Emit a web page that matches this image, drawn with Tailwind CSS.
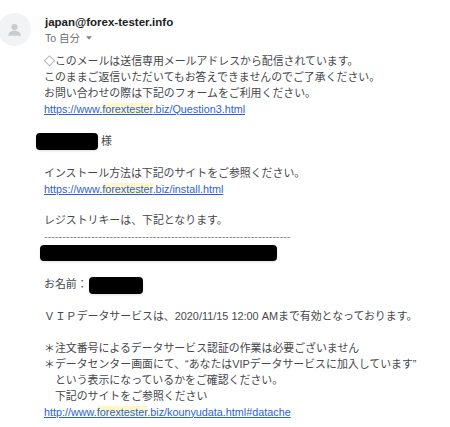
<!DOCTYPE html>
<html lang="ja">
<head>
  <meta charset="UTF-8" />
  <title>Mail</title>
  <script src="https://cdn.jsdelivr.net/npm/@tailwindcss/browser@4"></script>
</head>
<body class="bg-white w-[450px] h-[427px] overflow-hidden font-['Liberation_Sans','Noto_Sans_CJK_JP',sans-serif] text-[#45484b]">
  <div class="flex pt-[13px] -ml-[2px]">
    <div class="w-[33px] h-[33px] rounded-full bg-[#f1f3f4] flex items-center justify-center shrink-0">
      <svg width="15" height="15" viewBox="0 0 24 24" fill="#c9cccf"><circle cx="12" cy="8" r="5"/><path d="M2 21c0-4.500 5-7 10-7s10 2.500 10 7v1H2z"/></svg>
    </div>
    <div class="ml-[14px] pt-[1px]">
      <div class="text-[11.500px] leading-[16px] font-bold text-[#202124]">japan@forex-tester.info</div>
      <div class="flex items-center text-[10.500px] leading-[16px] text-[#6b6f73]">To 自分
        <svg class="ml-[6px]" width="6" height="4" viewBox="0 0 7 4" fill="#80868b"><path d="M0 0h7L3.500 4z"/></svg>
      </div>
    </div>
  </div>
  <div class="mt-[8px] pl-[44px] text-[10.900px] leading-[15.950px] whitespace-nowrap">
    <div>◇このメールは送信専用メールアドレスから配信されています。</div>
    <div>このままご返信いただいてもお答えできませんのでご了承ください。</div>
    <div>お問い合わせの際は下記のフォームをご利用ください。</div>
    <a class="block text-[10.800px] text-[#2a62d8] underline">https://www.<span class="bg-[#fff8c5]">forextester</span>.biz/Question3.html</a>
    <div class="h-[15.950px]"></div>
    <div class="flex items-center h-[15.950px]"><span class="-ml-[8px] w-[62px] h-[17px] bg-black rounded-[4px] shadow-sm"></span><span class="ml-[3px]">様</span></div>
    <div class="h-[15.950px]"></div>
    <div>インストール方法は下記のサイトをご参照ください。</div>
    <a class="block text-[10.800px] text-[#2a62d8] underline">https://www.<span class="bg-[#fff8c5]">forextester</span>.biz/install.html</a>
    <div class="h-[15.950px]"></div>
    <div>レジストリキーは、下記となります。</div>
    <div class="text-[#80868b]">--------------------------------------------------------------------</div>
    <div class="flex items-center h-[15.950px]"><span class="-ml-[4px] w-[237px] h-[16px] bg-black rounded-[4px] shadow-sm"></span></div>
    <div class="h-[15.950px]"></div>
    <div class="flex items-center h-[15.950px]">お名前：<span class="ml-[1px] w-[54px] h-[17px] bg-black rounded-[4px] shadow-sm"></span></div>
    <div class="h-[15.950px]"></div>
    <div>ＶＩＰデータサービスは、2020/11/15 12:00 AMまで有効となっております。</div>
    <div class="h-[15.950px]"></div>
    <div>＊注文番号によるデータサービス認証の作業は必要ございません</div>
    <div>＊データセンター画面にて、“あなたはVIPデータサービスに加入しています”</div>
    <div>　という表示になっているかをご確認ください。</div>
    <div>　下記のサイトをご参照ください</div>
    <a class="block text-[10.800px] text-[#2a62d8] underline">http://www.<span class="bg-[#fff8c5]">forextester</span>.biz/kounyudata.html#datache</a>
  </div>
</body>
</html>
